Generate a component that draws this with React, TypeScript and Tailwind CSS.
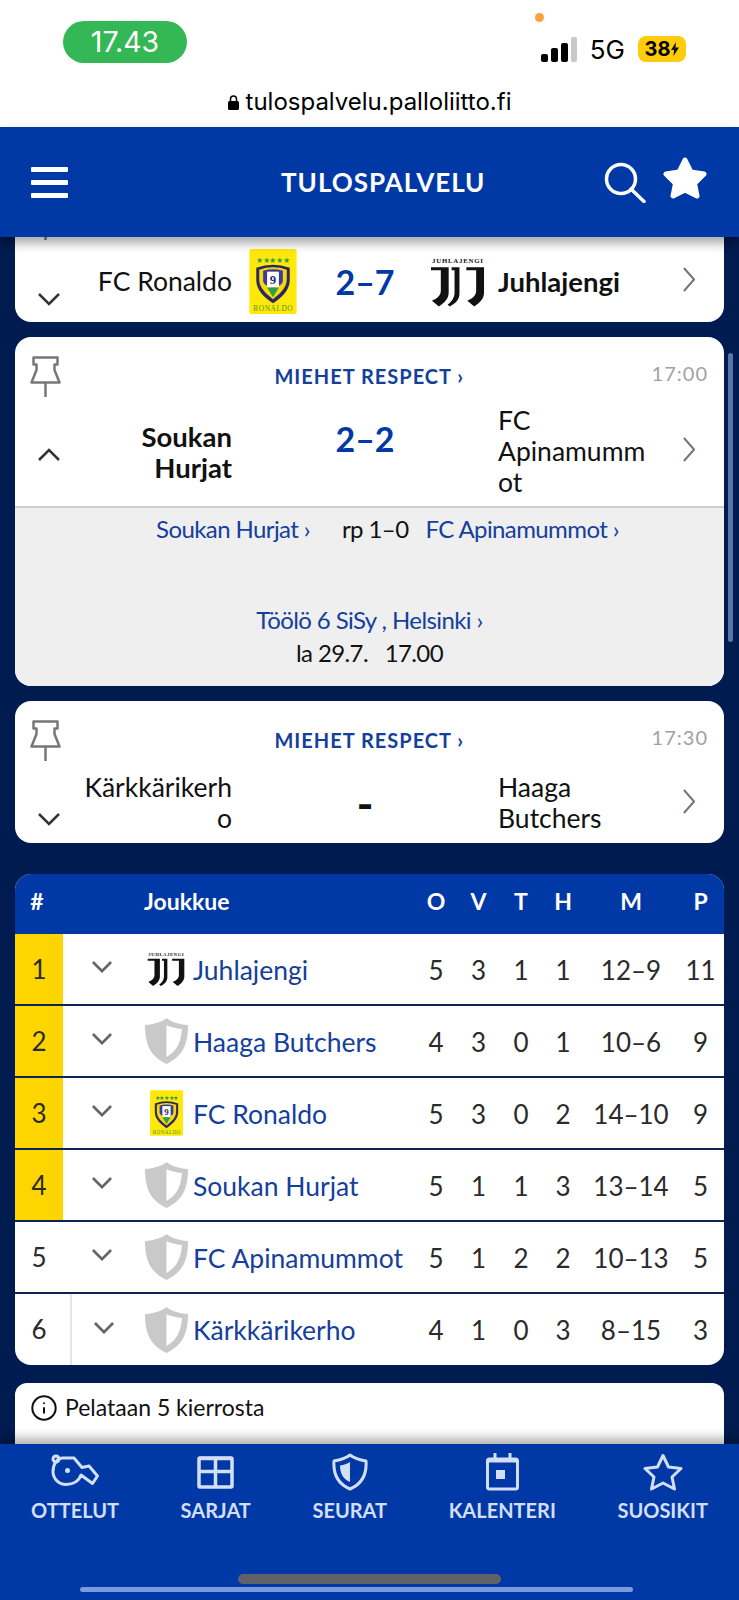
import { Info } from 'lucide-react';

const teams = [
  { pos: 1, name: 'Juhlajengi', logo: 'juve', o: 5, v: 3, t: 1, h: 1, m: '12–9', p: 11, top: true },
  { pos: 2, name: 'Haaga Butchers', logo: 'shield', o: 4, v: 3, t: 0, h: 1, m: '10–6', p: 9, top: true },
  { pos: 3, name: 'FC Ronaldo', logo: 'crest', o: 5, v: 3, t: 0, h: 2, m: '14–10', p: 9, top: true },
  { pos: 4, name: 'Soukan Hurjat', logo: 'shield', o: 5, v: 1, t: 1, h: 3, m: '13–14', p: 5, top: true },
  { pos: 5, name: 'FC Apinamummot', logo: 'shield', o: 5, v: 1, t: 2, h: 2, m: '10–13', p: 5, top: false },
  { pos: 6, name: 'Kärkkärikerho', logo: 'shield', o: 4, v: 1, t: 0, h: 3, m: '8–15', p: 3, top: false },
];

function JuveLogo({ className }: { className: string }) {
  return (
    <svg viewBox="0 0 56 50" className={className}>
      <text x="28" y="6" textAnchor="middle" fontSize="7" fontWeight="900" fontFamily="Liberation Serif, serif" fill="#111" textLength="52">
        JUHLAJENGI
      </text>
      <path d="M1 10H19V36C19 42 15 46 9 50L2 44C7 42 11 39 11 34V13H1Z" fill="#111" />
      <path d="M22 10H30V37C30 43 26 47 20 50L18 48C22 45 25 41 25 36V13H22Z" fill="#111" />
      <path d="M37 10H55V36C55 42 51 46 45 50L38 44C43 42 47 39 47 34V13H37Z" fill="#111" />
    </svg>
  );
}

function CrestLogo({ className }: { className: string }) {
  return (
    <svg viewBox="0 0 48 66" className={className}>
      <rect width="48" height="66" rx="2" fill="#ffe80a" />
      <text x="24" y="14" textAnchor="middle" fontSize="8" fill="#2f9e44" textLength="34">★★★★★</text>
      <path d="M7 19Q24 13 41 19V32C41 42 32 50 24 55C16 50 7 42 7 32Z" fill="#2b2a60" />
      <path d="M10 21Q24 16 38 21V31C38 40 30 46 24 51C18 46 10 40 10 31Z" fill="#f5d90a" />
      <path d="M14 22Q24 19 34 22V32C34 36 30 38 24 39C18 38 14 36 14 32Z" fill="#3a3aa0" />
      <rect x="18" y="23" width="12" height="16" fill="#fff" />
      <path d="M18 39H30L24 49Z" fill="#2f9e44" />
      <text x="24" y="36" textAnchor="middle" fontSize="13" fontWeight="700" fontFamily="Liberation Serif, serif" fill="#2b2a70">9</text>
      <text x="24" y="63" textAnchor="middle" fontSize="7.5" fontFamily="Liberation Serif, serif" fill="#4c9a1c" textLength="40">RONALDO</text>
    </svg>
  );
}

function GrayShield() {
  return (
    <svg viewBox="0 0 43 46" className="ml-[1px] w-[43px] h-[46px]">
      <path d="M21.5 0C26 4 34 6.500 43 7C43 26 38 38 21.500 46C5 38 0 26 0 7C9 6.500 17 4 21.500 0Z" fill="#c9c9c9" />
      <path d="M21.500 7C25 9 31 10.500 37 11C36 24 32 33 21.500 39Z" fill="#fff" />
    </svg>
  );
}

function Pin() {
  return (
    <svg viewBox="0 0 31 41" fill="none" stroke="#777" strokeWidth="2.500" strokeLinejoin="round" className="w-[31px] h-[41px]">
      <path d="M3.500 1.500H27.500V8.500H24.500V14L29.500 26.500H1.500L6.500 14V8.500H3.500Z" />
      <path d="M15.500 27V41" strokeLinecap="round" />
    </svg>
  );
}

function ChevronV({ up, color = '#333', width = '2.500', className }: { up?: boolean; color?: string; width?: string; className: string }) {
  return (
    <svg viewBox="0 0 22 13" fill="none" stroke={color} strokeWidth={width} className={className}>
      <path d={up ? 'M1 12L11 2L21 12' : 'M1 1L11 11L21 1'} />
    </svg>
  );
}

function ChevronRight() {
  return (
    <svg viewBox="0 0 13 27" fill="none" stroke="#6f7680" strokeWidth="2.200" className="w-[12px] h-[25px]">
      <path d="M1 1L12 13.500L1 26" />
    </svg>
  );
}

function MatchTop({ time, league = true }: { time?: string; league?: boolean }) {
  return (
    <div className="flex justify-between pl-[15px] pr-[16px] pt-[19px]">
      <Pin />
      {league && <div className="mt-[8px] ml-[26px] text-[20px] leading-[24px] font-bold tracking-[1px] text-[#14409c]">MIEHET RESPECT ›</div>}
      {league && <div className="mt-[5px] text-[20px] leading-[24px] tracking-[1px] text-[#a2a2a2]">{time}</div>}
    </div>
  );
}

function MatchRow({
  home,
  away,
  score,
  homeBold,
  awayBold,
  chevTop,
  up,
  scoreClass,
  rowClass,
  logos,
}: {
  home: string;
  away: string;
  score: string;
  homeBold?: boolean;
  awayBold?: boolean;
  chevTop: string;
  up?: boolean;
  scoreClass: string;
  rowClass: string;
  logos?: boolean;
}) {
  return (
    <div className={`flex text-[26.5px] leading-[31px] text-[#111] ${rowClass}`}>
      <div className={`w-[57px] pl-[23px] ${chevTop}`}>
        <ChevronV up={up} className="w-[22px] h-[13px]" />
      </div>
      <div className={`w-[160px] self-center text-right break-words ${homeBold ? 'font-bold text-[27.5px]' : ''}`}>{home}</div>
      <div className="w-[266px] flex justify-center items-center relative">
        {logos && <CrestLogo className="absolute left-[17px] top-0 w-[48px] h-[65px]" />}
        <div className={`font-bold ${scoreClass}`}>{score}</div>
        {logos && <JuveLogo className="absolute right-[13px] top-[8px] w-[55px] h-[50px]" />}
      </div>
      <div className={`w-[152px] self-center break-words ${awayBold ? 'font-bold text-[27.5px]' : ''}`}>{away}</div>
      <div className="flex-1 flex items-center pl-[33px] pb-[4px]">
        <ChevronRight />
      </div>
    </div>
  );
}

function Standings() {
  return (
    <div className="mt-[31px] rounded-[16px] overflow-hidden bg-white">
      <div className="grid grid-cols-[48px_81px_271px_42px_43px_42px_42px_94px_45px] h-[60px] pb-[5px] items-center bg-[#0039a6] text-[23px] font-bold text-white text-center">
        <div className="pr-[4px]">#</div>
        <div />
        <div className="text-left">Joukkue</div>
        <div>O</div>
        <div>V</div>
        <div>T</div>
        <div>H</div>
        <div>M</div>
        <div>P</div>
      </div>
      {teams.map((t) => (
        <div
          key={t.pos}
          className={`grid grid-cols-[48px_81px_271px_42px_43px_42px_42px_94px_45px] items-center text-center text-[26px] text-[#2b2b2b] ${
            t.pos === 6 ? 'h-[71px]' : 'h-[72px] border-b-2 border-[#0b2358]'
          }`}
        >
          <div className={`h-full flex items-center justify-center ${t.top ? 'bg-[#ffd500]' : ''}`}>{t.pos}</div>
          <div className={`h-full flex items-center pb-[4px] ${t.pos === 6 ? 'ml-[7px] pl-[22px] border-l-2 border-[#e4e4e4]' : 'pl-[29px]'}`}>
            <ChevronV color="#666" width="3" className="w-[20px] h-[12px]" />
          </div>
          <div className="flex items-center text-left text-[#14409c] text-[26.5px]">
            <div className="w-[50px] flex justify-start">
              {t.logo === 'juve' && <JuveLogo className="ml-[3px] w-[38px] h-[36px]" />}
              {t.logo === 'shield' && <GrayShield />}
              {t.logo === 'crest' && <CrestLogo className="ml-[6px] w-[33px] h-[46px]" />}
            </div>
            <span className="whitespace-nowrap pt-[3px] -ml-[1px]">{t.name}</span>
          </div>
          <div className="pt-[2px]">{t.o}</div>
          <div className="pt-[2px]">{t.v}</div>
          <div className="pt-[2px]">{t.t}</div>
          <div className="pt-[2px]">{t.h}</div>
          <div className="pt-[2px]">{t.m}</div>
          <div className="pt-[2px]">{t.p}</div>
        </div>
      ))}
    </div>
  );
}

const navLabel = 'mt-[8px] text-[20px] leading-[22px] font-bold text-[#d3dff7]';

function BottomNav() {
  return (
    <div className="relative z-10 h-[156px] shrink-0 bg-[#0039a6] shadow-[0_-6px_10px_rgba(0,0,0,0.3)]">
      <div className="flex justify-between px-[31px] pt-[9px]">
        <div className="flex flex-col items-center">
          <svg viewBox="0 0 48 33" fill="none" stroke="#d3dff7" strokeWidth="3" strokeLinejoin="round" className="w-[48px] h-[33px] mt-[1px] mb-[4px]">
            <circle cx="5" cy="5" r="3" />
            <path d="M12 4H23L31 13.500L38 12L46.500 22L41.500 29.500L30 21C28 27 22 30.500 15 30.500A13 13 0 0 1 2 18C2 10 6 4 12 4Z" />
            <circle cx="16.500" cy="16.500" r="2.500" fill="#d3dff7" stroke="none" />
          </svg>
          <div className={navLabel}>OTTELUT</div>
        </div>
        <div className="flex flex-col items-center">
          <svg viewBox="0 0 37 34" fill="none" stroke="#d3dff7" strokeWidth="3.500" strokeLinejoin="round" className="w-[37px] h-[34px] mt-[2px] mb-[2px] -ml-[1px]">
            <rect x="2" y="3" width="33" height="29" rx="1" />
            <path d="M2 16.500H35M18.500 3V32M2 3.500H35" />
          </svg>
          <div className={navLabel}>SARJAT</div>
        </div>
        <div className="flex flex-col items-center">
          <svg viewBox="0 0 36 38" fill="none" stroke="#d3dff7" strokeWidth="3" strokeLinejoin="round" className="w-[36px] h-[38px]">
            <path d="M18 2C22 5 28 7 34 8C35 22 30 31 18 36C6 31 1 22 2 8C8 7 14 5 18 2Z" />
            <path d="M18 9C15 11 12 12 8 12.500C8 20 11 26 18 29Z" fill="#d3dff7" stroke="none" />
          </svg>
          <div className={navLabel}>SEURAT</div>
        </div>
        <div className="flex flex-col items-center">
          <svg viewBox="0 0 33 38" fill="none" stroke="#d3dff7" strokeWidth="3" strokeLinejoin="round" className="w-[33px] h-[38px]">
            <rect x="1.500" y="6" width="30" height="30" rx="2" />
            <path d="M1.500 8H31.500M9 0V6M24 0V6" />
            <rect x="10" y="17" width="9" height="9" fill="#d3dff7" stroke="none" />
          </svg>
          <div className={navLabel}>KALENTERI</div>
        </div>
        <div className="flex flex-col items-center">
          <svg viewBox="0 0 40 38" fill="none" stroke="#d3dff7" strokeWidth="3" strokeLinejoin="round" className="w-[40px] h-[38px]">
            <path d="M20 2.500L25.500 14L38 15.500L29 24L31.500 36L20 30L8.500 36L11 24L2 15.500L14.500 14Z" />
          </svg>
          <div className={navLabel}>SUOSIKIT</div>
        </div>
      </div>
      <div className="mt-[53px] ml-[238px] w-[263px] h-[10px] rounded-full bg-[#5f6368]" />
      <div className="mt-[3px] ml-[80px] w-[553px] h-[5px] rounded-full bg-[#7c9ade]" />
    </div>
  );
}

export default function App() {
  return (
    <div className="relative w-[739px] h-[1600px] flex flex-col overflow-hidden bg-[#001b4f] font-['Lato',sans-serif]">
      <div className="relative shrink-0 h-[127px] bg-white font-['Inter',sans-serif] text-black">
        <div className="flex justify-between pl-[63px] pr-[53px]">
          <div className="mt-[21px] w-[124px] h-[42px] rounded-[21px] bg-[#34b755] flex items-center justify-center text-[28.5px] text-white">17.43</div>
          <div className="mt-[36px] flex items-center h-[26px]">
            <svg viewBox="0 0 36 25" className="w-[36px] h-[25px]">
              <rect x="0" y="17" width="7" height="8" rx="2" fill="#000" />
              <rect x="10" y="11" width="7" height="14" rx="2" fill="#000" />
              <rect x="20" y="6" width="7" height="19" rx="2" fill="#000" />
              <rect x="30" y="0" width="6" height="25" rx="2" fill="#c8c8c8" />
            </svg>
            <span className="ml-[13px] text-[26px]">5G</span>
            <div className="ml-[13px] w-[48px] h-[26px] rounded-[8px] bg-[#ffcc0a] flex items-center justify-center text-[20px] font-bold">
              38
              <svg viewBox="0 0 8 14" className="w-[8px] h-[14px] ml-[1px]">
                <path d="M5 0L0 8H3L2.500 14L8 5.500H4.500Z" fill="#111" />
              </svg>
            </div>
          </div>
        </div>
        <div className="mt-[24px] flex items-center justify-center text-[24px] leading-[30px]">
          <svg viewBox="0 0 11 15" className="w-[11px] h-[15px] mr-[7px]">
            <path d="M2.500 6V4A3 3 0 0 1 8.500 4V6" fill="none" stroke="#000" strokeWidth="1.500" />
            <rect y="6" width="11" height="9" rx="1.500" fill="#000" />
          </svg>
          tulospalvelu.palloliitto.fi
        </div>
        <div className="absolute left-[535px] top-[13px] w-[9px] h-[9px] rounded-full bg-[#ff9f40]" />
      </div>

      <div className="relative z-10 shrink-0 h-[110px] bg-[#0039a6] flex items-center pl-[31px] pr-[32px] shadow-[0_6px_10px_rgba(0,0,0,0.35)]">
        <div className="w-[37px] flex flex-col gap-[8px]">
          <div className="h-[5px] rounded-[1px] bg-white" />
          <div className="h-[5px] rounded-[1px] bg-white" />
          <div className="h-[5px] rounded-[1px] bg-white" />
        </div>
        <div className="ml-[213px] text-[26px] font-bold tracking-[1px] text-white">TULOSPALVELU</div>
        <div className="ml-auto flex items-center">
          <svg viewBox="0 0 42 41" fill="none" stroke="#fff" strokeWidth="3.500" className="w-[42px] h-[41px]">
            <circle cx="17" cy="17" r="14.500" />
            <path d="M27 27L40 39.500" strokeLinecap="round" />
          </svg>
          <svg viewBox="0 0 44 42" className="ml-[17px] mb-[8px] w-[44px] h-[42px]">
            <path d="M22 3L28 15L41 17L31.500 26.500L34 39L22 33L10 39L12.500 26.500L3 17L16 15Z" fill="#fff" stroke="#fff" strokeWidth="5" strokeLinejoin="round" />
          </svg>
        </div>
      </div>

      <div className="flex-1 min-h-0 overflow-hidden px-[15px]">
        <div className="-mt-[57px]">
          <div className="h-[142px] rounded-[16px] bg-white overflow-hidden">
            <MatchTop league={false} />
            <MatchRow
              home="FC Ronaldo"
              away="Juhlajengi"
              awayBold
              score="2–7"
              logos
              chevTop="mt-[44px]"
              scoreClass="text-[34px] text-[#0039a6]"
              rowClass="h-[65px] mt-[9px]"
            />
          </div>

          <div className="mt-[15px] rounded-[16px] bg-white overflow-hidden">
            <MatchTop time="17:00" />
            <MatchRow
              home="Soukan Hurjat"
              homeBold
              away="FC Apinamummot"
              score="2–2"
              up
              chevTop="mt-[43px]"
              scoreClass="text-[34px] text-[#0039a6] -mt-[26px]"
              rowClass="h-[93px] mt-[8px] mb-[8px]"
            />
            <div className="h-[180px] border-t-2 border-[#cfcfcf] bg-[#efeff0] text-[24px] tracking-[-0.6px] leading-[30px] text-[#111] flex flex-col items-center">
              <div className="mt-[6px] pl-[36px] flex whitespace-nowrap">
                <span className="text-[#14409c]">Soukan Hurjat ›</span>
                <span className="ml-[32px]">rp 1–0</span>
                <span className="ml-[17px] text-[#14409c]">FC Apinamummot ›</span>
              </div>
              <div className="mt-[61px] text-[#14409c]">Töölö 6 SiSy , Helsinki ›</div>
              <div className="mt-[3px] whitespace-pre">la 29.7.   17.00</div>
            </div>
          </div>

          <div className="mt-[15px] h-[142px] rounded-[16px] bg-white overflow-hidden">
            <MatchTop time="17:30" />
            <MatchRow
              home="Kärkkärikerho"
              away="Haaga Butchers"
              score="-"
              chevTop="mt-[41px]"
              scoreClass="text-[46px] font-black text-[#111]"
              rowClass="h-[62px] mt-[11px]"
            />
          </div>

          <Standings />

          <div className="mt-[18px] h-[80px] rounded-t-[12px] bg-white flex items-start pl-[15px] pt-[11px] text-[23px] leading-[26px] text-[#111]">
            <Info className="w-[28px] h-[28px] mr-[7px]" strokeWidth={1.75} />
            Pelataan 5 kierrosta
          </div>
        </div>
      </div>

      <BottomNav />

      <div className="absolute left-[728px] top-[353px] w-[5px] h-[289px] rounded-full bg-[#5a76a8]" />
    </div>
  );
}
